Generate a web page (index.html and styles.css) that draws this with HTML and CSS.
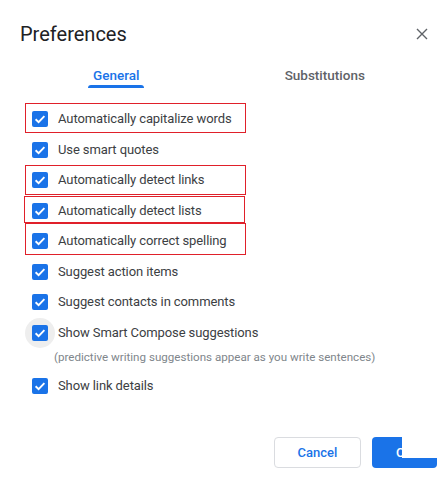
FILE: index.html
```html
<!DOCTYPE html>
<html>
<head>
<meta charset="utf-8">
<link rel="stylesheet" href="styles.css">
</head>
<body>
<div class="dialog">
  <div class="header">
    <div class="title">Preferences</div>
    <div class="close">
      <svg width="12" height="12" viewBox="0 0 12 12"><path d="M1 1L11 11M11 1L1 11" stroke="#5f6368" stroke-width="1.4" fill="none"/></svg>
    </div>
  </div>
  <div class="tabs">
    <div class="tab active"><span class="tab-label">General</span></div>
    <div class="tab"><span class="tab-label">Substitutions</span></div>
  </div>
  <div class="list">
    <div class="row"><span class="cb"><svg viewBox="0 0 16 16"><path d="M3.6 8.3L6.6 11.2L12.4 5.2" stroke="#fff" stroke-width="1.9" fill="none"/></svg></span><span class="label">Automatically capitalize words</span></div>
    <div class="row"><span class="cb"><svg viewBox="0 0 16 16"><path d="M3.6 8.3L6.6 11.2L12.4 5.2" stroke="#fff" stroke-width="1.9" fill="none"/></svg></span><span class="label">Use smart quotes</span></div>
    <div class="row"><span class="cb"><svg viewBox="0 0 16 16"><path d="M3.6 8.3L6.6 11.2L12.4 5.2" stroke="#fff" stroke-width="1.9" fill="none"/></svg></span><span class="label">Automatically detect links</span></div>
    <div class="row"><span class="cb"><svg viewBox="0 0 16 16"><path d="M3.6 8.3L6.6 11.2L12.4 5.2" stroke="#fff" stroke-width="1.9" fill="none"/></svg></span><span class="label">Automatically detect lists</span></div>
    <div class="row"><span class="cb"><svg viewBox="0 0 16 16"><path d="M3.6 8.3L6.6 11.2L12.4 5.2" stroke="#fff" stroke-width="1.9" fill="none"/></svg></span><span class="label">Automatically correct spelling</span></div>
    <div class="row"><span class="cb"><svg viewBox="0 0 16 16"><path d="M3.6 8.3L6.6 11.2L12.4 5.2" stroke="#fff" stroke-width="1.9" fill="none"/></svg></span><span class="label">Suggest action items</span></div>
    <div class="row"><span class="cb"><svg viewBox="0 0 16 16"><path d="M3.6 8.3L6.6 11.2L12.4 5.2" stroke="#fff" stroke-width="1.9" fill="none"/></svg></span><span class="label">Suggest contacts in comments</span></div>
    <div class="row focused"><span class="cb hover"><svg viewBox="0 0 16 16"><path d="M3.6 8.3L6.6 11.2L12.4 5.2" stroke="#fff" stroke-width="1.9" fill="none"/></svg></span><span class="label">Show Smart Compose suggestions</span></div>
    <div class="hint">(predictive writing suggestions appear as you write sentences)</div>
    <div class="row"><span class="cb"><svg viewBox="0 0 16 16"><path d="M3.6 8.3L6.6 11.2L12.4 5.2" stroke="#fff" stroke-width="1.9" fill="none"/></svg></span><span class="label">Show link details</span></div>

    <div class="mark m1"></div>
    <div class="mark m3"></div>
    <div class="mark m4"></div>
    <div class="mark m5"></div>
  </div>
  <div class="footer">
    <button class="btn cancel">Cancel</button>
    <button class="btn ok">OK</button>
    <div class="cover"></div>
  </div>
</div>
</body>
</html>
```
FILE: styles.css
```css
* { box-sizing: border-box; }
html { background: #fff; }
html, body { margin: 0; padding: 0; }
body {
  font-family: Roboto, "Liberation Sans", Arial, sans-serif;
  color: #3c4043;
  width: 445px;
  height: 485px;
  overflow: hidden;
}
.dialog { width: 445px; }
.header {
  display: flex;
  align-items: center;
  justify-content: space-between;
  padding: 22px 16px 0 20px;
}
.title {
  font-size: 20px;
  line-height: 24px;
  color: #202124;
  font-weight: 400;
}
.close {
  width: 12px;
  height: 12px;
  margin-right: 1px;
  display: flex;
}
.close svg { display: block; }
.tabs {
  display: flex;
  padding: 19px 16px 0 12px;
}
.tab {
  flex: 1;
  display: flex;
  justify-content: center;
}
.tab-label {
  font-size: 13.5px;
  line-height: 20px;
  font-weight: 500;
  color: #5f6368;
  padding: 0 4px 3px;
  position: relative;
}
.tab.active .tab-label { color: #1a73e8; padding: 0 5px 3px; }
.tab.active .tab-label::after {
  content: "";
  position: absolute;
  left: 0;
  right: 0;
  bottom: 0;
  height: 3px;
  background: #1a73e8;
  border-radius: 3px 3px 0 0;
}
.list {
  position: relative;
  padding: 16px 0 0 32px;
}
.row {
  display: flex;
  align-items: center;
  height: 30.5px;
}
.row.focused { isolation: isolate; }
.cb {
  width: 16px;
  height: 16px;
  border-radius: 2px;
  background: #1a73e8;
  flex: none;
  position: relative;
  display: block;
}
.cb svg {
  display: block;
  width: 16px;
  height: 16px;
}
.cb.hover::before {
  content: "";
  position: absolute;
  left: -7px;
  top: -7px;
  width: 30px;
  height: 30px;
  border-radius: 50%;
  background: #eeeeee;
  z-index: -1;
}
.label {
  margin-left: 10px;
  font-size: 13px;
  line-height: 20px;
  letter-spacing: -0.1px;
  color: #3c4043;
}
.hint {
  font-size: 11.6px;
  line-height: 16px;
  color: #80868b;
  margin: 1px 0 6px -10px;
  padding-left: 32px;
}
.mark {
  position: absolute;
  border: 1px solid #e0202a;
}
.m1 { left: 25px; top: 15px; width: 221px; height: 30px; }
.m3 { left: 25px; top: 77px; width: 221px; height: 30px; }
.m4 { left: 24px; top: 108px; width: 221px; height: 27px; }
.m5 { left: 25px; top: 135px; width: 221px; height: 32px; }
.footer {
  position: relative;
  display: flex;
  justify-content: flex-end;
  gap: 11px;
  padding: 35px 8px 0 0;
}
.btn {
  font-family: Roboto, "Liberation Sans", Arial, sans-serif;
  font-size: 13px;
  font-weight: 500;
  height: 31px;
  border-radius: 4px;
  padding: 0;
}
.cancel {
  width: 87px;
  background: #fff;
  border: 1px solid #dadce0;
  color: #1a73e8;
}
.ok {
  width: 65px;
  background: #1a73e8;
  border: none;
  color: #fff;
}
.cover {
  position: absolute;
  left: 402px;
  top: 0;
  right: 0;
  height: 56px;
  background: #fff;
}
```
